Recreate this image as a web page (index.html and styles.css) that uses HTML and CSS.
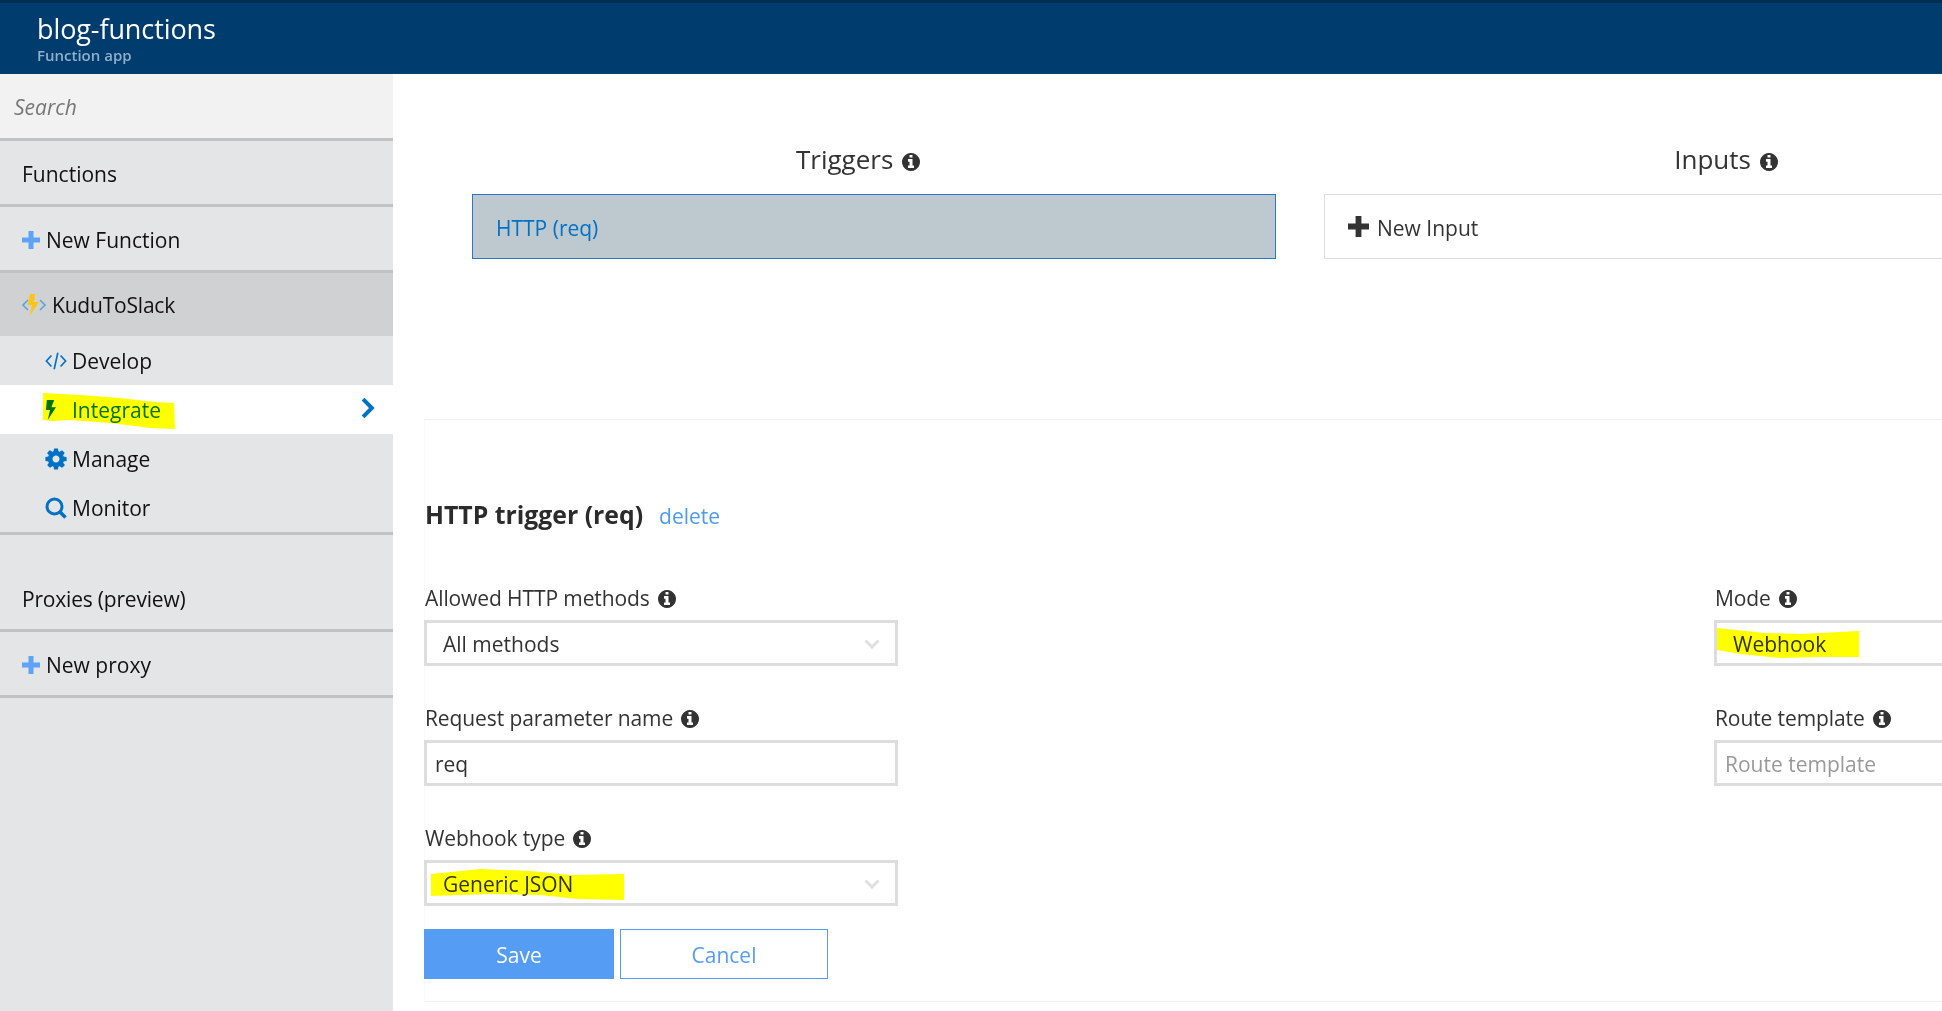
FILE: index.html
```html
<!DOCTYPE html>
<html lang="en">
  <head>
    <meta charset="UTF-8" />
    <title>blog-functions - Integrate</title>
    <link rel="stylesheet" href="styles.css">
  </head>
  <body>
    <svg class="defs" width="0" height="0">
      <symbol id="i-info" viewBox="128 128 1536 1536">
        <path d="M1152 1376v-160q0-14-9-23t-23-9h-96v-512q0-14-9-23t-23-9h-320q-14 0-23 9t-9 23v160q0 14 9 23t23 9h96v320h-96q-14 0-23 9t-9 23v160q0 14 9 23t23 9h448q14 0 23-9t9-23zm-128-896v-160q0-14-9-23t-23-9h-192q-14 0-23 9t-9 23v160q0 14 9 23t23 9h192q14 0 23-9t9-23zm640 416q0 209-103 385.5t-279.5 279.5-385.5 103-385.5-103-279.5-279.5-103-385.5 103-385.5 279.5-279.5 385.5-103 385.5 103 279.5 279.5 103 385.5z"/>
      </symbol>
      <symbol id="i-plus" viewBox="0 0 18 18">
        <path d="M6.5 0h5v6.5H18v5h-6.5V18h-5v-6.5H0v-5h6.5z"/>
      </symbol>
      <symbol id="i-chevron" viewBox="0 0 16 10">
        <path d="M1.5 1.5L8 8l6.5-6.5" fill="none" stroke="#e0e0e0" stroke-width="3"/>
      </symbol>
    </svg>

    <header class="topbar">
      <div class="app-name">blog-functions</div>
      <div class="app-type">Function app</div>
    </header>

    <div class="page">
      <nav class="sidebar">
        <div class="search">Search</div>
        <div class="nav-row">Functions</div>
        <div class="nav-row">
          <svg class="plus-icon"><use href="#i-plus"/></svg>New Function
        </div>
        <div class="nav-row nav-fn">
          <svg class="fn-icon" viewBox="0 0 24 22">
            <path d="M6 6L1 11l5 5M18 6l5 5-5 5" fill="none" stroke="#59a9d9" stroke-width="1.6"/>
            <path d="M13 0H8L5.500 11H10L7.500 22 17 8h-5z" fill="#fcc419"/>
          </svg>KuduToSlack
        </div>
        <div class="subnav">
          <div class="sub-row">
            <svg class="sub-icon" viewBox="0 0 24 20">
              <path d="M7 4L1.500 10 7 16M17 4l5.500 6-5.500 6M14 1l-4 18" fill="none" stroke="#0072c6" stroke-width="1.800"/>
            </svg>Develop
          </div>
          <div class="sub-row sub-active">
            <svg class="sub-icon" viewBox="0 0 24 22">
              <path d="M2 0h8L7 8h5L3 22l2.500-11H1z" fill="#0072c6"/>
            </svg>Integrate
            <svg class="sub-arrow" viewBox="0 0 14 20">
              <path d="M2.500 2l8 8-8 8" fill="none" stroke="#0072c6" stroke-width="3.600"/>
            </svg>
          </div>
          <div class="sub-row">
            <svg class="sub-icon" viewBox="100 100 1592 1592">
              <path fill="#0072c6" d="M1152 896q0-106-75-181t-181-75-181 75-75 181 75 181 181 75 181-75 75-181zm512-109v222q0 12-8 23t-20 13l-185 28q-19 54-39 91 35 50 107 138 10 12 10 25t-9 23q-27 37-99 108t-94 71q-12 0-26-9l-138-108q-44 23-91 38-16 136-29 186-7 28-36 28h-222q-14 0-24.500-8.500t-11.500-21.500l-28-184q-49-16-90-37l-141 107q-10 9-25 9-14 0-25-11-126-114-165-168-7-10-7-23 0-12 8-23 15-21 51-66.500t54-70.500q-27-50-41-99l-183-27q-13-2-21-12.500t-8-23.500v-222q0-12 8-23t19-13l186-28q14-46 39-92-40-57-107-138-10-12-10-24 0-10 9-23 26-36 98.500-107.500t94.500-71.500q13 0 26 10l138 107q44-23 91-38 16-136 29-186 7-28 36-28h222q14 0 24.500 8.500t11.500 21.500l28 184q49 16 90 37l142-107q9-9 24-9 13 0 25 10 129 119 165 170 7 8 7 22 0 12-8 23-15 21-51 66.500t-54 70.500q26 50 41 98l183 28q13 2 21 12.500t8 23.500z"/>
            </svg>Manage
          </div>
          <div class="sub-row">
            <svg class="sub-icon" viewBox="0 0 22 22">
              <circle cx="9.500" cy="9.500" r="7.500" fill="none" stroke="#0072c6" stroke-width="3"/>
              <path d="M14.500 14.500l6 6" stroke="#0072c6" stroke-width="3.600"/>
            </svg>Monitor
          </div>
        </div>
        <div class="nav-row nav-proxies">Proxies (preview)</div>
        <div class="nav-row">
          <svg class="plus-icon"><use href="#i-plus"/></svg>New proxy
        </div>
      </nav>

      <main class="content">
        <section class="bindings">
          <div class="binding-col col-triggers">
            <h2 class="binding-title">Triggers <svg class="info info-lg"><use href="#i-info"/></svg></h2>
            <div class="binding-box box-selected">HTTP (req)</div>
          </div>
          <div class="binding-col">
            <h2 class="binding-title">Inputs <svg class="info info-lg"><use href="#i-info"/></svg></h2>
            <div class="binding-box"><svg class="new-plus"><use href="#i-plus"/></svg>New Input</div>
          </div>
        </section>

        <section class="detail">
          <div class="detail-head">
            <h3 class="detail-title">HTTP trigger (req)</h3>
            <a class="delete-link">delete</a>
          </div>
          <div class="form-grid">
            <div class="form-col">
              <div class="field">
                <div class="field-label">Allowed HTTP methods <svg class="info"><use href="#i-info"/></svg></div>
                <div class="control select">All methods<svg class="chevron"><use href="#i-chevron"/></svg></div>
              </div>
              <div class="field">
                <div class="field-label">Request parameter name <svg class="info"><use href="#i-info"/></svg></div>
                <div class="control text-input">req</div>
              </div>
              <div class="field">
                <div class="field-label">Webhook type <svg class="info"><use href="#i-info"/></svg></div>
                <div class="control select">Generic JSON<svg class="chevron"><use href="#i-chevron"/></svg></div>
              </div>
              <div class="buttons">
                <button class="btn btn-save">Save</button>
                <button class="btn btn-cancel">Cancel</button>
              </div>
            </div>
            <div class="form-col">
              <div class="field">
                <div class="field-label">Mode <svg class="info"><use href="#i-info"/></svg></div>
                <div class="control select">Webhook</div>
              </div>
              <div class="field">
                <div class="field-label">Route template <svg class="info"><use href="#i-info"/></svg></div>
                <div class="control text-input placeholder">Route template</div>
              </div>
            </div>
          </div>
        </section>
      </main>
    </div>

    <!-- highlighter marks drawn on top of the screenshot -->
    <svg class="marker" viewBox="0 0 1942 1011">
      <polygon points="43,393 80,395 120,398 155,402 174,403 175,429 150,428 110,423 70,420 52,421 43,420"/>
      <polygon points="431,874 480,869 530,871 570,875 624,874 624,900 577,899 540,895 490,894 431,896"/>
      <polygon points="1717,628 1765,633 1800,634 1859,631 1859,657 1820,657 1780,658 1740,654 1717,650"/>
    </svg>
  </body>
</html>
```

FILE: styles.css
```css
html,
body {
  margin: 0;
  padding: 0;
  height: 100%;
  overflow: hidden;
}
body {
  position: relative;
  font-family: "Open Sans", sans-serif;
  color: #333;
  background: #fff;
}
.defs {
  position: absolute;
}

/* top bar */
.topbar {
  box-sizing: border-box;
  height: 74px;
  padding: 9px 0 0 37px;
  background: #003c6e;
  border-top: 3px solid #002f55;
  color: #fff;
}
.app-name {
  font-size: 27px;
  line-height: 34px;
  letter-spacing: -0.1px;
}
.app-type {
  font-size: 15px;
  line-height: 19px;
  font-weight: 600;
  color: #8fb0c9;
}

.page {
  display: flex;
  height: 937px;
}

/* left nav */
.sidebar {
  width: 393px;
  flex: none;
  background: #e4e5e7;
  color: #111;
  font-size: 21px;
}
.search {
  box-sizing: border-box;
  height: 67px;
  padding: 18px 14px 0;
  background: #f2f2f2;
  border-bottom: 3px solid #c2c2c2;
  font-style: italic;
  color: #777;
  line-height: 30px;
}
.nav-row {
  box-sizing: border-box;
  display: flex;
  align-items: center;
  height: 66px;
  padding: 2px 0 0 22px;
  border-bottom: 3px solid #c2c2c2;
}
.nav-fn {
  height: 63px;
  padding-top: 1px;
  background: #d0d1d3;
  border-bottom: 0;
  letter-spacing: -0.2px;
}
.nav-proxies {
  height: 97px;
  padding: 34px 0 0 22px;
  letter-spacing: -0.2px;
}
.plus-icon {
  width: 18px;
  height: 18px;
  margin-right: 6px;
  fill: #5ea3f7;
}
.fn-icon {
  width: 24px;
  height: 22px;
  margin-right: 6px;
}
.subnav {
  border-bottom: 3px solid #c2c2c2;
}
.sub-row {
  display: flex;
  align-items: center;
  height: 49px;
  padding-left: 45px;
}
.sub-active {
  background: #fff;
  color: #0072c6;
}
.sub-icon {
  width: 22px;
  height: 22px;
  margin-right: 5px;
}
.sub-arrow {
  width: 16px;
  height: 22px;
  margin-left: auto;
  margin-right: 17px;
  margin-bottom: 4px;
}

/* trigger and input columns */
.content {
  flex: 1;
  min-width: 0;
  padding-left: 31px;
  overflow: hidden;
}
.bindings {
  display: flex;
  gap: 48px;
  box-sizing: border-box;
  height: 345px;
  padding: 67px 0 0 48px;
}
.binding-col {
  flex: none;
  width: 804px;
}
.col-triggers .binding-title {
  padding-right: 32px;
}
.binding-title {
  margin: 0 0 16px;
  font-size: 26px;
  font-weight: 400;
  line-height: 37px;
  text-align: center;
}
.binding-box {
  box-sizing: border-box;
  display: flex;
  align-items: center;
  height: 65px;
  padding: 3px 0 0 23px;
  border: 1px solid #ddd;
  font-size: 21px;
}
.box-selected {
  background: #bdc8cf;
  border-color: #2a78c5;
  color: #0072c6;
}
.new-plus {
  width: 21px;
  height: 21px;
  margin-right: 8px;
  margin-top: -3px;
  fill: #333;
}
.info {
  width: 18px;
  height: 18px;
  margin-left: 3px;
  vertical-align: -2px;
  fill: #333;
}
.info-lg {
  margin-left: 2px;
}

/* detail panel */
.detail {
  box-sizing: border-box;
  height: 583px;
  border-top: 1px solid #eee;
  border-left: 1px solid #fafafa;
  border-bottom: 1px solid #f0f0f0;
}
.detail-head {
  display: flex;
  align-items: baseline;
  height: 153px;
  padding-top: 74px;
  box-sizing: border-box;
}
.detail-title {
  margin: 0 16px 0 0;
  font-size: 24.8px;
  font-weight: 700;
  line-height: 40px;
  color: #2b2b2b;
}
.delete-link {
  font-size: 21px;
  color: #4a9bf5;
}
.form-grid {
  display: flex;
  gap: 816px;
  margin-left: -1px;
}
.form-col {
  flex: none;
  width: 474px;
}
.field {
  margin-bottom: 27px;
}
.field-label {
  height: 47px;
  box-sizing: border-box;
  padding: 10px 0 0 1px;
  font-size: 21px;
  line-height: 30px;
  letter-spacing: -0.1px;
}
.control {
  box-sizing: border-box;
  display: flex;
  align-items: center;
  width: 100%;
  height: 46px;
  padding-top: 1px;
  border: 3px solid #ddd;
  font-size: 21px;
  background: #fff;
}
.select {
  padding-left: 16px;
}
.text-input {
  padding-left: 8px;
}
.placeholder {
  color: #999;
}
.chevron {
  width: 16px;
  height: 10px;
  margin-left: auto;
  margin-right: 15px;
}
.buttons {
  display: flex;
  gap: 6px;
  margin-top: -4px;
}
.btn {
  box-sizing: border-box;
  height: 50px;
  padding: 2px 0 0;
  border: 1px solid #559cf5;
  font-family: inherit;
  font-size: 21px;
  color: #fff;
  background: #559cf5;
}
.btn-save {
  width: 190px;
}
.btn-cancel {
  width: 208px;
  background: #fff;
  color: #559cf5;
}

/* yellow highlighter */
.marker {
  position: absolute;
  left: 0;
  top: 0;
  width: 1942px;
  height: 1011px;
  fill: #ffff00;
  mix-blend-mode: multiply;
  pointer-events: none;
}
```
